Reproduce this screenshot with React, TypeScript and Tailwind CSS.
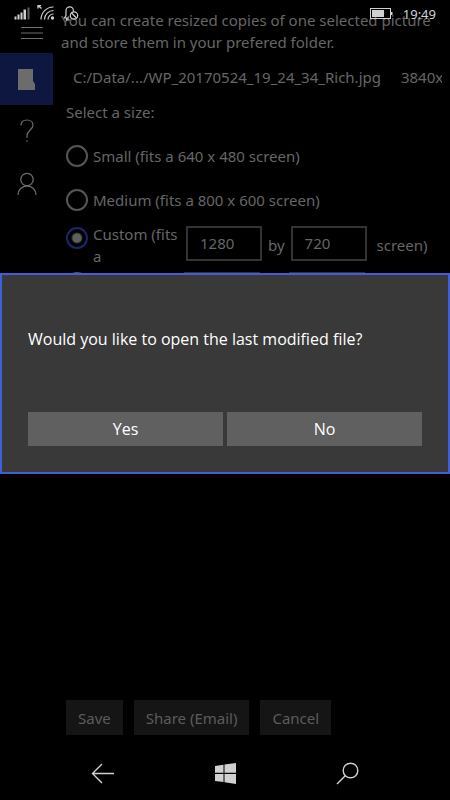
import React, { useState } from "react";

const sizes = [
  { id: "small", label: "Small (fits a 640 x 480 screen)" },
  { id: "medium", label: "Medium (fits a 800 x 600 screen)" },
];

const radioClass =
  "size-[22px] shrink-0 appearance-none rounded-full border-2 border-[#565656] checked:border-[#1c2668] checked:bg-[radial-gradient(circle,#606060_4px,transparent_6px)]";

const fieldClass =
  "h-[35px] w-[76px] border-2 border-[#333] bg-black px-3 pb-[2px] text-[#666] outline-none";

const actionClass = "h-[35px] bg-[#151515] px-3 text-[#5c5c5c]";

const StatusBar: React.FC = () => (
  <div className="absolute inset-x-0 top-0 z-10 flex h-[27px] items-center justify-between px-[14px] text-[#d0d0d0]">
    {/* Signal, wifi and quiet hours */}
    <svg width="66" height="18" viewBox="0 0 66 18" fill="none" stroke="currentColor">
      <g fill="currentColor" stroke="none">
        <rect x="0.5" y="11.5" width="2" height="3" />
        <rect x="3.5" y="9.5" width="2" height="5" />
        <rect x="6.5" y="7.5" width="2" height="7" />
        <rect x="9.5" y="4.5" width="2.5" height="10" />
        <rect x="13.5" y="2.5" width="2" height="12" opacity="0.45" />
        <circle cx="38.5" cy="13" r="1.7" />
      </g>
      <path d="M27 14.5A12.5 12.5 0 0 1 39.5 2M30.5 14.5A9 9 0 0 1 39.5 5.5M34 14.5A5.5 5.5 0 0 1 39.5 9" strokeWidth="1.2" />
      <path d="M27.5 3.5 24 0.5M24 3.5V0.5H27" strokeWidth="1.3" />
      <path d="M55 13H50.5L52 10.5V5.5A3.7 3.7 0 0 1 59.4 5.5V6.5M52.5 13V14.8H55.5" strokeWidth="1.2" />
      <circle cx="60" cy="10.5" r="3.7" strokeWidth="1.2" />
      <path d="M57.5 8 62.5 13" strokeWidth="1.2" />
    </svg>
    <div className="flex items-center gap-[10px]">
      <svg width="23" height="11" viewBox="0 0 23 11" fill="currentColor">
        <rect x="0.5" y="0.5" width="20" height="10" fill="none" stroke="currentColor" />
        <rect x="2" y="2" width="12" height="7" />
        <rect x="21" y="4" width="1.5" height="3" />
      </svg>
      <span className="text-[13px]">19:49</span>
    </div>
  </div>
);

const Sidebar: React.FC = () => (
  <nav className="flex w-[53px] shrink-0 flex-col pt-[13px] text-[#6c6c6c]">
    <button aria-label="Menu" className="flex h-10 items-center justify-end pr-[10px]">
      <svg width="22" height="14" viewBox="0 0 22 14" stroke="currentColor">
        <path d="M0 1.5H22M0 7H22M0 12.5H22" />
      </svg>
    </button>
    <button aria-label="Resize" className="flex h-[52px] items-center justify-center bg-[#0e1740]">
      <svg width="17" height="21" viewBox="0 0 17 21" fill="currentColor">
        <path d="M0 0H15V12L17 15V21H0Z" />
      </svg>
    </button>
    <button aria-label="Help" className="flex h-[52px] items-center justify-center">
      <svg width="14" height="24" viewBox="0 0 14 24" fill="none" stroke="currentColor" strokeWidth="1.2">
        <path d="M1 6.5C1 3 3.5 1 7 1S13 3.2 13 6C13 11 7 11.5 7 16.5V19" />
        <path d="M7 21.5V23" />
      </svg>
    </button>
    <button aria-label="Account" className="flex h-[54px] items-center justify-center">
      <svg width="20" height="24" viewBox="0 0 20 24" fill="none" stroke="currentColor" strokeWidth="1.3">
        <circle cx="10" cy="7.5" r="6.2" />
        <path d="M1 23C1 17.5 5 14 10 14S19 17.5 19 23" />
      </svg>
    </button>
  </nav>
);

const App: React.FC = () => {
  const [size, setSize] = useState("custom");
  const [open, setOpen] = useState(true);

  return (
    <div className="flex min-h-screen flex-col bg-black font-['Noto_Sans','Open_Sans',sans-serif] text-[15px] leading-[22px] text-[#666]">
      <div className="relative flex flex-1">
        <StatusBar />
        <Sidebar />

        {/* Main Content */}
        <main className="flex min-w-0 flex-1 flex-col pt-[9px] pr-2 pb-3 pl-2">
          <p className="whitespace-nowrap">
            You can create resized copies of one selected picture
            <br />
            and store them in your prefered folder.
          </p>
          <div className="mt-[13px] flex gap-5 overflow-hidden pl-3 whitespace-nowrap">
            <span>C:/Data/.../WP_20170524_19_24_34_Rich.jpg</span>
            <span>3840x</span>
          </div>

          <fieldset className="mt-[13px] pl-[5px]">
            <legend>Select a size:</legend>
            {sizes.map((item) => (
              <label key={item.id} className="mt-[22px] flex items-center gap-[5px] whitespace-nowrap">
                <input
                  type="radio"
                  name="size"
                  className={radioClass}
                  checked={size === item.id}
                  onChange={() => setSize(item.id)}
                />
                {item.label}
              </label>
            ))}
            <div className="mt-3 flex items-start">
              <label className="flex w-[120px] shrink-0 items-start gap-[5px]">
                <input
                  type="radio"
                  name="size"
                  className={`mt-1 ${radioClass}`}
                  checked={size === "custom"}
                  onChange={() => setSize("custom")}
                />
                <span>Custom (fits a</span>
              </label>
              <input aria-label="Width" defaultValue="1280" className={`mt-[3px] ${fieldClass}`} />
              <span className="mx-[6px] mt-[11px]">by</span>
              <input aria-label="Height" defaultValue="720" className={`mt-[3px] ${fieldClass}`} />
              <span className="mt-[11px] ml-[10px]">screen)</span>
            </div>
            <div className="mt-[5px] flex items-start">
              <div className="w-[118px] shrink-0">
                <input
                  type="radio"
                  name="size"
                  aria-label="Percent"
                  className={radioClass}
                  checked={size === "percent"}
                  onChange={() => setSize("percent")}
                />
              </div>
              <input aria-label="Width percent" className={fieldClass} />
              <input aria-label="Height percent" className={`ml-[29px] ${fieldClass}`} />
            </div>
          </fieldset>

          {/* Actions */}
          <div className="mt-auto flex gap-[11px] pl-[5px] whitespace-nowrap">
            <button className={actionClass}>Save</button>
            <button className={actionClass}>Share (Email)</button>
            <button className={actionClass}>Cancel</button>
          </div>
        </main>

        {/* Dialog */}
        {open && (
          <div className="absolute inset-0 z-20 flex items-center font-['Open_Sans',sans-serif] text-base leading-[22px]">
            <div
              role="dialog"
              aria-label="Open file"
              className="w-full border-2 border-[#3f5fd8] bg-[#393939] px-[26px] pt-[53px] pb-[26px] text-white"
            >
              <p className="whitespace-nowrap">
                Would you like to open the last modified file?
              </p>
              <div className="mt-[62px] grid grid-cols-2 gap-1">
                <button onClick={() => setOpen(false)} className="h-[34px] bg-[#606060]">
                  Yes
                </button>
                <button onClick={() => setOpen(false)} className="h-[34px] bg-[#606060]">
                  No
                </button>
              </div>
            </div>
          </div>
        )}
      </div>

      {/* Navigation bar */}
      <footer className="flex h-[53px] items-center justify-between px-[91px] text-[#d0d0d0]">
        <button aria-label="Back">
          <svg width="23" height="21" viewBox="0 0 23 21" fill="none" stroke="currentColor" strokeWidth="1.4">
            <path d="M11 1 1.5 10.5 11 20M1.5 10.5H23" />
          </svg>
        </button>
        <button aria-label="Start">
          <svg width="21" height="21" viewBox="0 0 21 21" fill="currentColor">
            <path d="M0 3 8.5 1.8V9.8H0ZM9.5 1.6 21 0V9.8H9.5ZM0 10.9H8.5V19.1L0 18ZM9.5 10.9H21V21L9.5 19.3Z" />
          </svg>
        </button>
        <button aria-label="Search">
          <svg width="23" height="23" viewBox="0 0 23 23" fill="none" stroke="currentColor" strokeWidth="1.4">
            <circle cx="14.5" cy="8.5" r="7.3" />
            <path d="M9.5 13.5 1 22" />
          </svg>
        </button>
      </footer>
    </div>
  );
};

export default App;
